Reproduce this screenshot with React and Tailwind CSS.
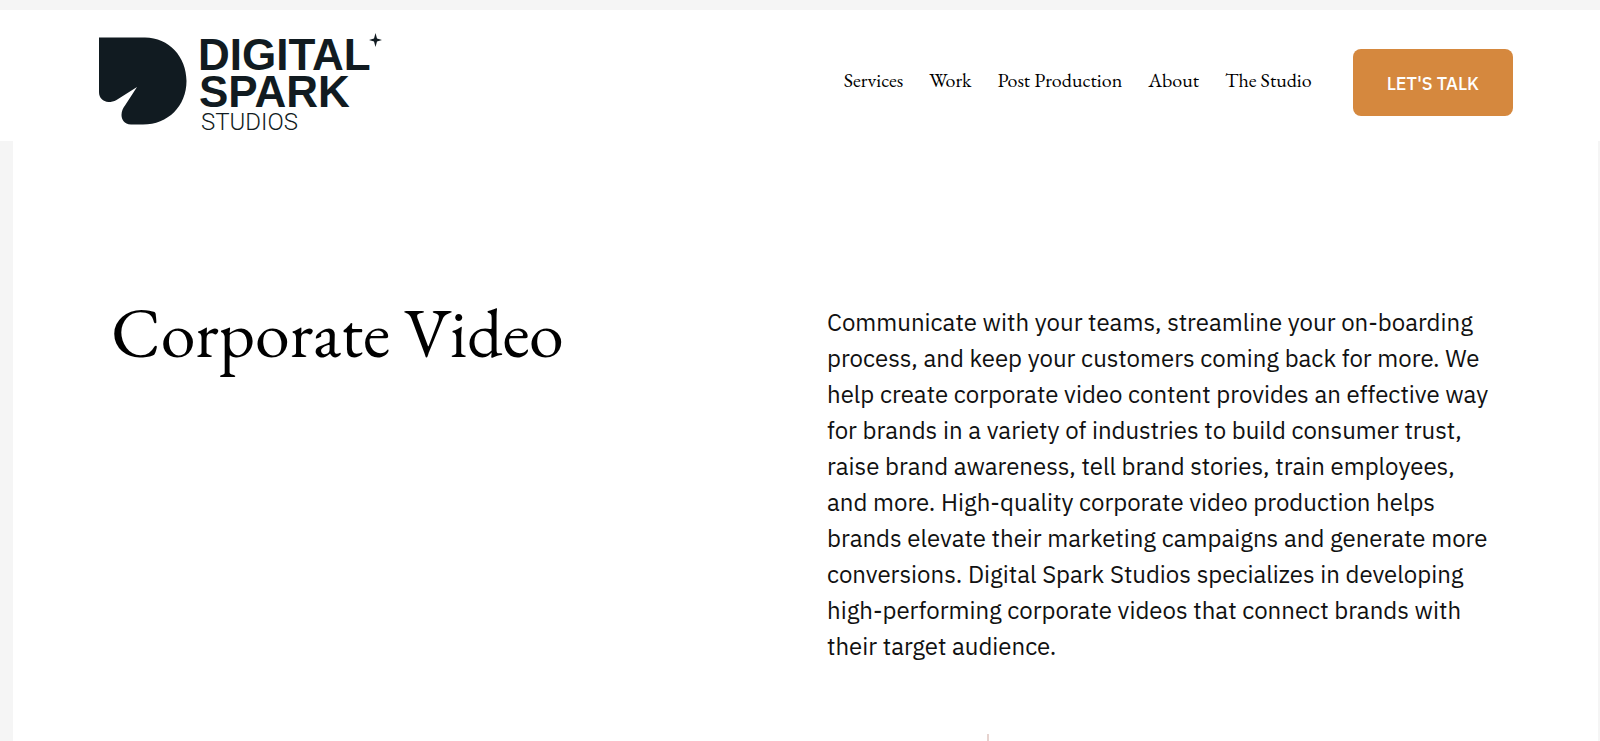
const links = ["Services", "Work", "Post Production", "About", "The Studio"];

function Logo() {
  return (
    <svg viewBox="0 -4 290 112" className="h-[112px] w-[290px]" fill="#111b21" role="img" aria-label="Digital Spark Studios">
      <path d="M1 7.5H47C71 7.5 88.500 27 88.500 51C88.500 76 70 94.500 45 94.500H33C26 94.500 23.500 89 23.500 85C23.500 81 25 78 27 75.500L39 57L18.500 70C16 71.600 13 72 10.500 72C5 71.500 1 68 1 62Z" />
      <path d="M277.500 3L279 8.500L284 10L279 11.500L277.500 17L276 11.500L271 10L276 8.500Z" />
      <text x="100" y="40" fontSize="44" fontWeight="700" fontFamily="Liberation Sans, sans-serif">DIGITAL</text>
      <text x="101" y="77" fontSize="44" fontWeight="700" fontFamily="Liberation Sans, sans-serif">SPARK</text>
      <text x="103" y="100" fontSize="24" fontWeight="300" fontFamily="Roboto, sans-serif">STUDIOS</text>
    </svg>
  );
}

export default function App() {
  return (
    <div className="flex min-h-screen flex-col bg-[#f5f5f5] pt-[10px] text-black">
      <header className="flex h-[131px] items-center justify-between bg-white pl-[98px] pr-[87px] pt-[13px]">
        <a href="#home"><Logo /></a>
        <div className="flex items-center gap-[41px]">
          <nav className="flex gap-[26px] pb-1 font-['EB_Garamond','Liberation_Serif',serif] text-[20px] leading-[30px]">
            {links.map((l) => <a key={l} href="#">{l}</a>)}
          </nav>
          <button className="h-[67px] rounded-lg bg-[#d5883e] px-[34px] pt-[3px] font-['IBM_Plex_Sans','Roboto',sans-serif] text-[18px] font-medium text-white">LET'S TALK</button>
        </div>
      </header>
      <main className="ml-[13px] mr-[2px] flex grow flex-col bg-white">
        <section className="grid grow grid-cols-[716px_1fr] pl-[98px] pt-[156px]">
          <h1 className="font-['EB_Garamond','Liberation_Serif',serif] text-[70px] leading-[72px]">Corporate Video</h1>
          <p className="max-w-[670px] pt-[7px] font-['IBM_Plex_Sans','Open_Sans',sans-serif] text-[24px] leading-[36px] text-[#111]">
            Communicate with your teams, streamline your on-boarding process, and keep your customers coming back for more. We help create corporate video content provides an effective way for brands in a variety of industries to build consumer trust, raise brand awareness, tell brand stories, train employees, and more. High-quality corporate video production helps brands elevate their marketing campaigns and generate more conversions. Digital Spark Studios specializes in developing high-performing corporate videos that connect brands with their target audience.
          </p>
        </section>
        <div className="ml-[974px] h-[7px] w-[2px] bg-[#e6d3cf]" />
      </main>
    </div>
  );
}
